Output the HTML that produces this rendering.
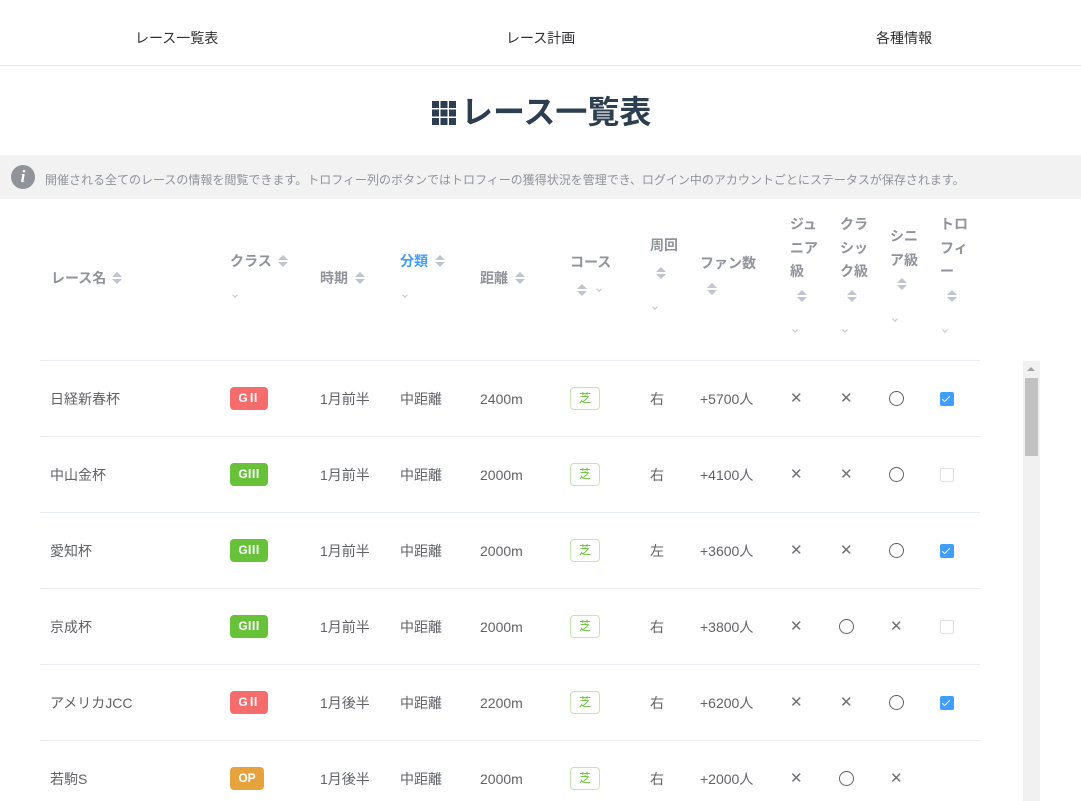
<!DOCTYPE html>
<html><head><meta charset="utf-8"><style>
*{margin:0;padding:0;box-sizing:border-box}
body{width:1081px;height:801px;overflow:hidden;background:#fff;font-family:"Liberation Sans","Noto Sans CJK JP",sans-serif;position:relative;color:#606266}
.a{position:absolute;white-space:nowrap}
.nav{font-size:14px;color:#303133;top:29px;line-height:18px}
.h{font-size:14px;font-weight:bold;color:#909399;line-height:18px}
.s{position:absolute;width:10px;height:14px}
.s:before{content:"";position:absolute;left:0;top:1px;border:5px solid transparent;border-top:0;border-bottom:5px solid #c0c4cc}
.s:after{content:"";position:absolute;left:0;top:8px;border:5px solid transparent;border-bottom:0;border-top:5px solid #c0c4cc}
.c{position:absolute;width:4px;height:4px;border-right:1px solid #c0c4cc;border-bottom:1px solid #c0c4cc;transform:rotate(45deg)}
.d{font-size:14px;color:#606266;line-height:18px}
.line{position:absolute;left:40px;width:940px;height:1px;background:#ebeef5}
.b{position:absolute;left:230px;height:23px;border-radius:4px;color:#fff;font-size:12px;font-weight:bold;line-height:23px;text-align:center}
.tag{position:absolute;left:570px;width:30px;height:23px;border:1px solid #c2e7b0;border-radius:4px;color:#67c23a;font-size:12px;line-height:21px;text-align:center;background:#fff}
.x{font-size:15px;color:#707277}
.o{position:absolute;width:15px;height:15px;border:1.3px solid #606266;border-radius:50%}
.cb{position:absolute;left:940px;width:14px;height:14px;border-radius:2px}
.cb.on{background:#409eff}
.cb.on:after{content:"";position:absolute;left:4px;top:2px;width:3px;height:7px;border-right:1px solid #fff;border-bottom:1px solid #fff;transform:rotate(45deg)}
.cb.off{border:1px solid #dcdfe6;background:#fff}
</style></head><body>
<div class="a nav" style="left:135px">レース一覧表</div>
<div class="a nav" style="left:506px">レース計画</div>
<div class="a nav" style="left:876px">各種情報</div>
<div class="a" style="left:0;top:65px;width:1081px;height:1px;background:#e4e4e4"></div>

<svg class="a" style="left:432px;top:101px" width="24" height="24" viewBox="0 0 24 24" fill="#2c3e50">
<rect x="0" y="0" width="7" height="7"/><rect x="8.5" y="0" width="7" height="7"/><rect x="17" y="0" width="7" height="7"/>
<rect x="0" y="8.5" width="7" height="7"/><rect x="8.5" y="8.5" width="7" height="7"/><rect x="17" y="8.5" width="7" height="7"/>
<rect x="0" y="17" width="7" height="7"/><rect x="8.5" y="17" width="7" height="7"/><rect x="17" y="17" width="7" height="7"/></svg>
<div class="a" style="left:461px;top:92px;font-size:32px;font-weight:bold;color:#2c3e50;line-height:40px">レース一覧表</div>

<div class="a" style="left:0;top:155px;width:1081px;height:44px;background:#f2f2f2"></div>
<div class="a" style="left:11px;top:165px;width:24px;height:24px;border-radius:50%;background:#909399;color:#fff;font:italic bold 17px 'Liberation Serif',serif;text-align:center;line-height:24px">i</div>
<div class="a" style="left:45px;top:172px;font-size:12px;color:#909399;line-height:16px">開催される全てのレースの情報を閲覧できます。トロフィー列のボタンではトロフィーの獲得状況を管理でき、ログイン中のアカウントごとにステータスが保存されます。</div>

<div class="a h" style="left:51px;top:269px">レース名</div><div class="s" style="left:112px;top:271px"></div>
<div class="a h" style="left:230px;top:252px">クラス</div><div class="s" style="left:278px;top:254px"></div><div class="c" style="left:233px;top:293px"></div>
<div class="a h" style="left:320px;top:269px">時期</div><div class="s" style="left:355px;top:271px"></div>
<div class="a h" style="left:400px;top:252px;color:#409eff">分類</div><div class="s" style="left:435px;top:254px"></div><div class="c" style="left:403px;top:293px"></div>
<div class="a h" style="left:480px;top:269px">距離</div><div class="s" style="left:515px;top:271px"></div>
<div class="a h" style="left:570px;top:253px">コース</div><div class="s" style="left:577px;top:283px"></div><div class="c" style="left:597px;top:287px"></div>
<div class="a h" style="left:650px;top:236px">周回</div><div class="s" style="left:656px;top:266px"></div><div class="c" style="left:653px;top:305px"></div>
<div class="a h" style="left:700px;top:254px">ファン数</div><div class="s" style="left:707px;top:282px"></div>
<div class="a h" style="left:790px;top:213px;line-height:23.5px">ジュ<br>ニア<br>級</div><div class="s" style="left:797px;top:289px"></div><div class="c" style="left:793px;top:328px"></div>
<div class="a h" style="left:840px;top:213px;line-height:23.5px">クラ<br>シッ<br>ク級</div><div class="s" style="left:847px;top:289px"></div><div class="c" style="left:843px;top:328px"></div>
<div class="a h" style="left:890px;top:225px;line-height:23.5px">シニ<br>ア級</div><div class="s" style="left:897px;top:277px"></div><div class="c" style="left:893px;top:317px"></div>
<div class="a h" style="left:940px;top:213px;line-height:23.5px">トロ<br>フィ<br>ー</div><div class="s" style="left:947px;top:289px"></div><div class="c" style="left:943px;top:328px"></div>

<div class="line" style="top:360px"></div>
<div class="line" style="top:436px"></div>
<div class="line" style="top:512px"></div>
<div class="line" style="top:588px"></div>
<div class="line" style="top:664px"></div>
<div class="line" style="top:740px"></div>

<div class="a" style="left:1023px;top:361px;width:17px;height:440px;background:#f1f1f1"></div>
<div class="a" style="left:1025px;top:378px;width:13px;height:78px;background:#c1c1c1"></div>
<div class="a" style="left:1027px;top:367px;border:4px solid transparent;border-top:0;border-bottom:4px solid #a3a3a3"></div>

<div class="a d" style="left:50px;top:390px">日経新春杯</div>
<div class="b" style="top:387px;width:38px;background:#f56c6c">GⅡ</div>
<div class="a d" style="left:320px;top:390px">1月前半</div><div class="a d" style="left:400px;top:390px">中距離</div><div class="a d" style="left:480px;top:390px">2400m</div>
<div class="tag" style="top:387px">芝</div><div class="a d" style="left:650px;top:390px">右</div><div class="a d" style="left:700px;top:390px">+5700人</div>
<div class="a x" style="left:790px;top:389px">✕</div><div class="a x" style="left:840px;top:389px">✕</div><div class="o" style="left:889px;top:391px"></div><div class="cb on" style="top:392px"></div>

<div class="a d" style="left:50px;top:466px">中山金杯</div>
<div class="b" style="top:463px;width:38px;background:#67c23a">GⅢ</div>
<div class="a d" style="left:320px;top:466px">1月前半</div><div class="a d" style="left:400px;top:466px">中距離</div><div class="a d" style="left:480px;top:466px">2000m</div>
<div class="tag" style="top:463px">芝</div><div class="a d" style="left:650px;top:466px">右</div><div class="a d" style="left:700px;top:466px">+4100人</div>
<div class="a x" style="left:790px;top:465px">✕</div><div class="a x" style="left:840px;top:465px">✕</div><div class="o" style="left:889px;top:467px"></div><div class="cb off" style="top:468px"></div>

<div class="a d" style="left:50px;top:542px">愛知杯</div>
<div class="b" style="top:539px;width:38px;background:#67c23a">GⅢ</div>
<div class="a d" style="left:320px;top:542px">1月前半</div><div class="a d" style="left:400px;top:542px">中距離</div><div class="a d" style="left:480px;top:542px">2000m</div>
<div class="tag" style="top:539px">芝</div><div class="a d" style="left:650px;top:542px">左</div><div class="a d" style="left:700px;top:542px">+3600人</div>
<div class="a x" style="left:790px;top:541px">✕</div><div class="a x" style="left:840px;top:541px">✕</div><div class="o" style="left:889px;top:543px"></div><div class="cb on" style="top:544px"></div>

<div class="a d" style="left:50px;top:618px">京成杯</div>
<div class="b" style="top:615px;width:38px;background:#67c23a">GⅢ</div>
<div class="a d" style="left:320px;top:618px">1月前半</div><div class="a d" style="left:400px;top:618px">中距離</div><div class="a d" style="left:480px;top:618px">2000m</div>
<div class="tag" style="top:615px">芝</div><div class="a d" style="left:650px;top:618px">右</div><div class="a d" style="left:700px;top:618px">+3800人</div>
<div class="a x" style="left:790px;top:617px">✕</div><div class="o" style="left:839px;top:619px"></div><div class="a x" style="left:890px;top:617px">✕</div><div class="cb off" style="top:620px"></div>

<div class="a d" style="left:50px;top:694px">アメリカJCC</div>
<div class="b" style="top:691px;width:38px;background:#f56c6c">GⅡ</div>
<div class="a d" style="left:320px;top:694px">1月後半</div><div class="a d" style="left:400px;top:694px">中距離</div><div class="a d" style="left:480px;top:694px">2200m</div>
<div class="tag" style="top:691px">芝</div><div class="a d" style="left:650px;top:694px">右</div><div class="a d" style="left:700px;top:694px">+6200人</div>
<div class="a x" style="left:790px;top:693px">✕</div><div class="a x" style="left:840px;top:693px">✕</div><div class="o" style="left:889px;top:695px"></div><div class="cb on" style="top:696px"></div>

<div class="a d" style="left:50px;top:770px">若駒S</div>
<div class="b" style="top:767px;width:34px;background:#e6a23c">OP</div>
<div class="a d" style="left:320px;top:770px">1月後半</div><div class="a d" style="left:400px;top:770px">中距離</div><div class="a d" style="left:480px;top:770px">2000m</div>
<div class="tag" style="top:767px">芝</div><div class="a d" style="left:650px;top:770px">右</div><div class="a d" style="left:700px;top:770px">+2000人</div>
<div class="a x" style="left:790px;top:769px">✕</div><div class="o" style="left:839px;top:771px"></div><div class="a x" style="left:890px;top:769px">✕</div>
</body></html>
